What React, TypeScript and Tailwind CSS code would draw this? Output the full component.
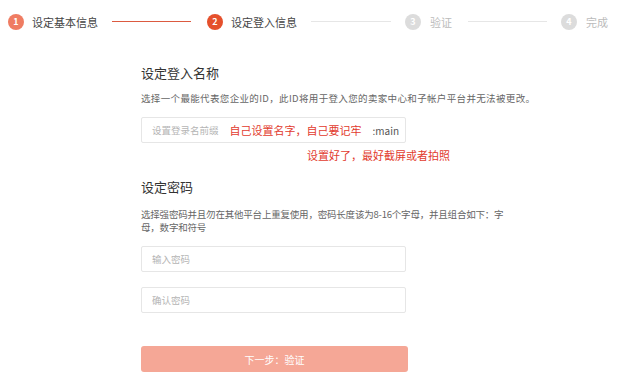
import React from 'react';

interface StepProps {
  num: number;
  label: string;
  circle: string;
  text: string;
  circleMl: string;
  textMl: string;
}

const Step: React.FC<StepProps> = ({ num, label, circle, text, circleMl, textMl }) => (
  <div className="flex items-center">
    <span className={`${circleMl} flex h-4 w-4 items-center justify-center rounded-full text-[9px] font-bold text-white ${circle}`}>{num}</span>
    <span className={`${textMl} text-[11px] leading-4 ${text}`}>{label}</span>
  </div>
);

const Line: React.FC<{ color: string; ml: string; w: string }> = ({ color, ml, w }) => (
  <div className={`${ml} ${w} h-px ${color}`} />
);

const App: React.FC = () => {
  return (
    <div className="h-[383px] w-[623px] overflow-hidden bg-white font-['Noto_Sans_CJK_SC',sans-serif]">
      <div className="flex h-[43px] items-center">
        <Step num={1} label="设定基本信息" circle="bg-[#ef7c62]" text="text-[#444]" circleMl="ml-[8px]" textMl="ml-[8px]" />
        <Line color="bg-[#dc5a40]" ml="ml-[14px]" w="w-[79px]" />
        <Step num={2} label="设定登入信息" circle="bg-[#e5502c]" text="text-[#444]" circleMl="ml-[16px]" textMl="ml-[8px]" />
        <Line color="bg-[#e6e6e6]" ml="ml-[14px]" w="w-[80px]" />
        <Step num={3} label="验证" circle="bg-[#dcdcdc]" text="text-[#bbb]" circleMl="ml-[14px]" textMl="ml-[9px]" />
        <Line color="bg-[#e6e6e6]" ml="ml-[16px]" w="w-[79px]" />
        <Step num={4} label="完成" circle="bg-[#dcdcdc]" text="text-[#bbb]" circleMl="ml-[14px]" textMl="ml-[9px]" />
      </div>

      <div className="pl-[141px]">
        <h2 className="mt-[22px] text-[13px] leading-4 text-[#333]">设定登入名称</h2>
        <p className="mt-[10px] whitespace-nowrap text-[9.5px] leading-[14px] tracking-[0.35px] text-[#666]">
          选择一个最能代表您企业的ID，此ID将用于登入您的卖家中心和子帐户平台并无法被更改。
        </p>
        <div className="mt-[12px] flex h-[26px] w-[265px] items-center rounded-[2px] border border-[#e6e6e6] pl-[10px]">
          <span className="text-[9.5px] text-[#b5b5b5]">设置登录名前缀</span>
          <span className="ml-[11px] text-[11px] text-[#e23b2e]">自己设置名字，自己要记牢</span>
          <span className="ml-[11px] text-[10px] text-[#555]">:main</span>
        </div>
        <p className="ml-[166px] mt-[5px] text-[11px] leading-[14px] text-[#e23b2e]">设置好了，最好截屏或者拍照</p>

        <h2 className="mt-[17px] text-[13px] leading-4 text-[#333]">设定密码</h2>
        <p className="mt-[13px] whitespace-nowrap text-[9.5px] leading-[13px] tracking-[-0.2px] text-[#666]">
          选择强密码并且勿在其他平台上重复使用，密码长度该为8-16个字母，并且组合如下：字<br />母，数字和符号
        </p>
        <div className="mt-[12px] flex h-[26px] w-[265px] items-center rounded-[2px] border border-[#e6e6e6] pl-[10px]">
          <span className="text-[9.5px] text-[#b5b5b5]">输入密码</span>
        </div>
        <div className="mt-[15px] flex h-[26px] w-[265px] items-center rounded-[2px] border border-[#e6e6e6] pl-[10px]">
          <span className="text-[9.5px] text-[#b5b5b5]">确认密码</span>
        </div>
        <button className="mt-[33px] flex h-[26px] w-[267px] items-center justify-center rounded-[3px] bg-[#f5a796] text-[10px] text-white">
          下一步：验证
        </button>
      </div>
    </div>
  );
};

export default App;
